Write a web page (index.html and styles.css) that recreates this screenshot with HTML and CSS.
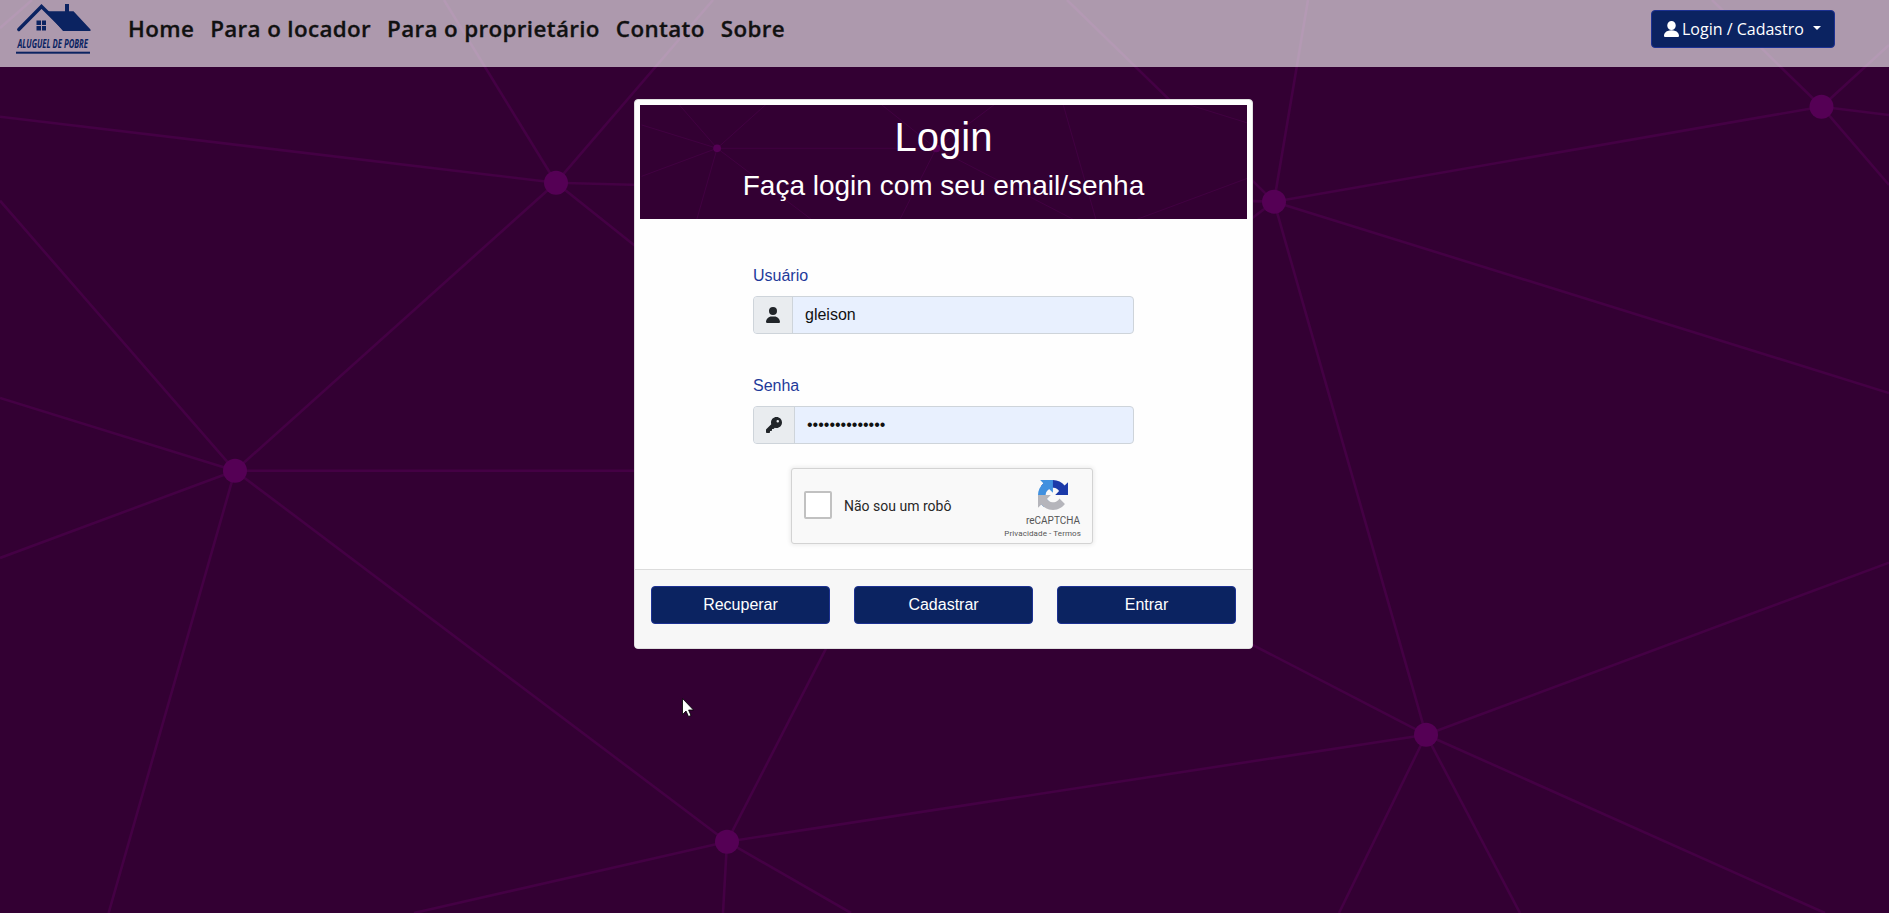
FILE: index.html
```html
<!DOCTYPE html>
<html lang="pt-br">
<head>
<meta charset="utf-8">
<title>Aluguel de Pobre</title>
<link rel="stylesheet" href="styles.css">
</head>
<body>
<svg class="backdrop" viewBox="0 0 1889 913" aria-hidden="true">
  <defs>
    <g id="network">
      <path class="edges" d="M0 28L32 0M556 182.7L0 116.7M556 182.7L444 0M556 182.7L713 0M556 182.7L1274 201.7M556 182.7L917 471M556 182.7L235 470.7M235 470.7L0 200.7M235 470.7L0 398M235 470.7H917M235 470.7L0 558M235 470.7L108.6 913M235 470.7L727 841.7M917 471L727 841.7M917 471L1426 734.7M917 471L1274 201.7M727 841.7L1426 734.7M727 841.7L414 913M727 841.7L723 913M727 841.7L851 913M1274 201.7L1308 0M1274 201.7L1067 0M1274 201.7L1821.5 106.7M1274 201.7L1889 393M1274 201.7L1426 734.7M1821.5 106.7L1712 0M1821.5 106.7L1889 45M1821.5 106.7L1889 115M1821.5 106.7L1889 185M1426 734.7L1889 562.7M1426 734.7L1825 913M1426 734.7L1339 913M1426 734.7L1520 913"/>
      <g class="nodes"><circle cx="556" cy="182.7" r="12"/><circle cx="235" cy="470.7" r="12"/><circle cx="917" cy="471" r="12"/><circle cx="727" cy="841.7" r="12"/><circle cx="1274" cy="201.7" r="12"/><circle cx="1821.5" cy="106.7" r="12"/><circle cx="1426" cy="734.7" r="12"/></g>
    </g>
  </defs>
  <use href="#network"/>
</svg>

<header class="navbar">
  <a class="brand">
    <svg width="76" height="54" viewBox="0 0 76 54">
      <g fill="#0b2361">
        <path d="M2.800 29.500L25.500 6.500 48.500 29.200" fill="none" stroke="#0b2361" stroke-width="3.400" stroke-linecap="round" stroke-linejoin="miter"/>
        <path d="M30 11.200H49V4H53V11.200H57.500L74.500 29.500V31H47z"/>
        <path d="M20.500 20.500h4.500v4.500h-4.500zM26 20.500h4v4.500h-4zM20.500 26h4.500v4.500h-4.500zM26 26h4v4.500h-4z"/>
        <rect x="0" y="51.700" width="74" height="2"/>
      </g>
      <text class="brand-text" x="1.500" y="47.700" textLength="70.500" lengthAdjust="spacingAndGlyphs">ALUGUEL DE POBRE</text>
    </svg>
  </a>
  <nav class="links">
    <a>Home</a><a>Para o locador</a><a>Para o proprietário</a><a>Contato</a><a>Sobre</a>
  </nav>
  <button class="btn account"><svg class="account-icon" viewBox="2 2 12 12" preserveAspectRatio="none"><path d="M3 14s-1 0-1-1 1-4 6-4 6 3 6 4-1 1-1 1H3zm5-5.200a3.400 3.400 0 1 0 0-6.800 3.400 3.400 0 0 0 0 6.800z"/></svg><span>Login / Cadastro</span><i class="caret"></i></button>
</header>

<main class="card">
  <div class="card-header">
    <svg class="card-pattern" viewBox="-5 336 1889 355" preserveAspectRatio="xMinYMin slice" aria-hidden="true"><use href="#network"/></svg>
    <h1>Login</h1>
    <h2>Faça login com seu email/senha</h2>
  </div>
  <form class="card-body">
    <label>Usuário</label>
    <div class="group">
      <span class="addon"><svg width="14" height="16" viewBox="0 0 448 512"><path d="M224 256A128 128 0 1 0 224 0a128 128 0 1 0 0 256zm-45.700 48C79.800 304 0 383.800 0 482.300 0 498.700 13.300 512 29.700 512H418.300c16.400 0 29.700-13.300 29.700-29.700C448 383.800 368.200 304 269.700 304H178.300z"/></svg></span>
      <span class="input">gleison</span>
    </div>
    <label class="second">Senha</label>
    <div class="group">
      <span class="addon key"><svg width="16" height="16" viewBox="0 0 512 512"><path d="M336 352c97.200 0 176-78.800 176-176S433.200 0 336 0S160 78.800 160 176c0 18.700 2.900 36.800 8.300 53.700L7 391c-4.500 4.500-7 10.600-7 17v80c0 13.300 10.700 24 24 24h80c13.300 0 24-10.700 24-24V448h40c13.300 0 24-10.700 24-24V384h40c6.400 0 12.500-2.500 17-7l33.300-33.300c16.900 5.400 35 8.300 53.700 8.300zM376 96a40 40 0 1 1 0 80 40 40 0 1 1 0-80z"/></svg></span>
      <span class="input">••••••••••••••</span>
    </div>
    <div class="captcha">
      <span class="checkbox"></span>
      <span class="captcha-label">Não sou um robô</span>
      <div class="captcha-brand">
        <svg width="30" height="30" viewBox="0 0 64 64">
          <path fill="#1c3aa9" d="M64 31.955l-.033-1.370V4.687l-7.160 7.160C50.948 4.674 42.033.093 32.050.093c-10.400 0-19.622 4.960-25.458 12.640l11.736 11.860a15.550 15.550 0 0 1 4.754-5.334c2.050-1.600 4.952-2.906 8.968-2.906.485 0 .860.057 1.135.163 4.976.393 9.288 3.140 11.828 7.124l-8.307 8.307L64 31.953"/>
          <path fill="#4090df" d="M31.862.094l-1.370.033H4.594l7.160 7.160C4.580 13.147 0 22.060 0 32.046c0 10.400 4.960 19.622 12.640 25.458L24.500 45.768a15.550 15.550 0 0 1-5.334-4.754c-1.600-2.050-2.906-4.952-2.906-8.968 0-.485.057-.860.163-1.135.393-4.976 3.140-9.288 7.124-11.828l8.307 8.307L31.860.095"/>
          <path fill="#b5b5bb" d="M.001 32.045l.033 1.370v25.898l7.160-7.160c5.860 7.173 14.774 11.754 24.760 11.754 10.400 0 19.622-4.960 25.458-12.640l-11.736-11.860a15.550 15.550 0 0 1-4.754 5.334c-2.050 1.600-4.952 2.906-8.968 2.906-.485 0-.860-.057-1.135-.163-4.976-.393-9.288-3.140-11.828-7.124l8.307-8.307c-10.522.040-22.400.066-27.295-.005"/>
        </svg>
        <span class="captcha-name">reCAPTCHA</span>
        <span class="captcha-legal">Privacidade - Termos</span>
      </div>
    </div>
  </form>
  <div class="card-footer">
    <button class="btn">Recuperar</button><button class="btn">Cadastrar</button><button class="btn">Entrar</button>
  </div>
</main>
<svg class="cursor" width="12" height="19" viewBox="0 0 12 19"><path d="M.5.5V16.500L4 13l2.500 5.500 2.500-1L6.600 12H11.500z" fill="#fff" stroke="#000" stroke-width=".8"/></svg>
</body>
</html>
```

FILE: styles.css
```css
* { box-sizing: border-box; }
body {
  margin: 0;
  height: 913px;
  overflow: hidden;
  background: #330033;
  font: 16px/24px "Liberation Sans", Arial, sans-serif;
  color: #212529;
}
.backdrop {
  position: absolute;
  inset: 0;
  width: 1889px;
  height: 913px;
  z-index: -1;
}
.edges { fill: none; stroke: #440044; stroke-width: 2.6; }
.nodes { fill: #550055; }

.navbar {
  display: flex;
  align-items: flex-start;
  height: 67px;
  padding: 0 54px 0 16px;
  background: rgba(255, 255, 255, .6);
}
.brand { display: block; width: 76px; height: 54px; }
.brand svg { display: block; overflow: visible; }
.brand-text {
  font: italic bold 13px/1 "Open Sans", sans-serif;
  fill: #0b2361;
}
.links {
  display: flex;
  gap: 16px;
  margin: 13px auto 0 36px;
  font: 600 22.4px/32px "Open Sans", sans-serif;
  letter-spacing: .35px;
  color: #111;
  -webkit-text-stroke: .3px #111;
  white-space: nowrap;
}
.btn {
  height: 38px;
  padding: 0 12px;
  border: 1px solid #1c3192;
  border-radius: 4px;
  background: #0b2361;
  color: #fff;
  font: 16px/24px "Liberation Sans", Arial, sans-serif;
}
.account {
  display: flex;
  align-items: center;
  width: 184px;
  margin-top: 10px;
  font-family: "Open Sans", sans-serif;
  white-space: nowrap;
}
.account-icon { flex: none; width: 15px; height: 16px; margin-right: 3px; fill: #fff; }
.caret {
  margin: 0 0 2px 9px;
  border: 4.8px solid transparent;
  border-top-color: #fff;
  border-bottom: 0;
}

.card {
  width: 619px;
  height: 550px;
  margin: 32px 0 0 634px;
  border: 1px solid #dfdfdf;
  border-radius: 4px;
  background: #fefefe;
  overflow: hidden;
  display: flex;
  flex-direction: column;
}
.card-header {
  position: relative;
  height: 114px;
  margin: 5px;
  padding-top: 10px;
  background: #330033;
  color: #fff;
  text-align: center;
}
.card-pattern { position: absolute; inset: 0; width: 607px; height: 114px; }
h1, h2 { position: relative; margin: 0; font-weight: 400; }
h1 { font-size: 40px; line-height: 44px; }
h2 { font-size: 28px; line-height: 34px; margin-top: 10px; }
.card-body {
  flex: 1;
  padding: 40px 118px 0;
}
label { display: block; color: #1e3a9a; line-height: 24px; margin-bottom: 8px; }
.second { margin-top: 40px; }
.group {
  display: flex;
  height: 38px;
  border: 1px solid #ced4da;
  border-radius: 4px;
  background: #e8f0fe;
  overflow: hidden;
}
.addon {
  display: flex;
  align-items: center;
  justify-content: center;
  width: 39px;
  background: #e9ecef;
  border-right: 1px solid #ced4da;
}
.addon svg { fill: #212529; }
.addon.key { width: 41px; }
.input { padding: 6px 12px; line-height: 24px; color: #111; }
.captcha {
  display: flex;
  align-items: flex-start;
  width: 302px;
  height: 76px;
  margin: 24px 0 0 38px;
  padding: 0 11px 0 12px;
  border: 1px solid #d3d3d3;
  border-radius: 3px;
  background: #f9f9f9;
  box-shadow: 0 0 4px 1px rgba(0, 0, 0, .08);
}
.checkbox {
  width: 28px;
  height: 28px;
  margin-top: 22px;
  border: 2px solid #c1c1c1;
  border-radius: 2px;
  background: #fff;
}
.captcha-label {
  margin: 29px auto 0 12px;
  font: 14px/17px Roboto, sans-serif;
  color: #282727;
}
.captcha-brand {
  display: flex;
  flex-direction: column;
  align-items: flex-end;
  padding-top: 11px;
  font-family: Roboto, sans-serif;
  color: #555;
}
.captcha-brand svg { margin-right: 13px; }
.captcha-name { font-size: 10px; line-height: 12px; margin: 5px 1px 0 0; }
.captcha-legal { font-size: 8px; line-height: 10px; margin-top: 2px; letter-spacing: .1px; }
.card-footer {
  display: grid;
  grid-template-columns: repeat(3, 1fr);
  gap: 24px;
  height: 79px;
  padding: 16px;
  border-top: 1px solid #dcdcdc;
  background: #f7f7f7;
}
.cursor { position: absolute; left: 682px; top: 698px; }
```
